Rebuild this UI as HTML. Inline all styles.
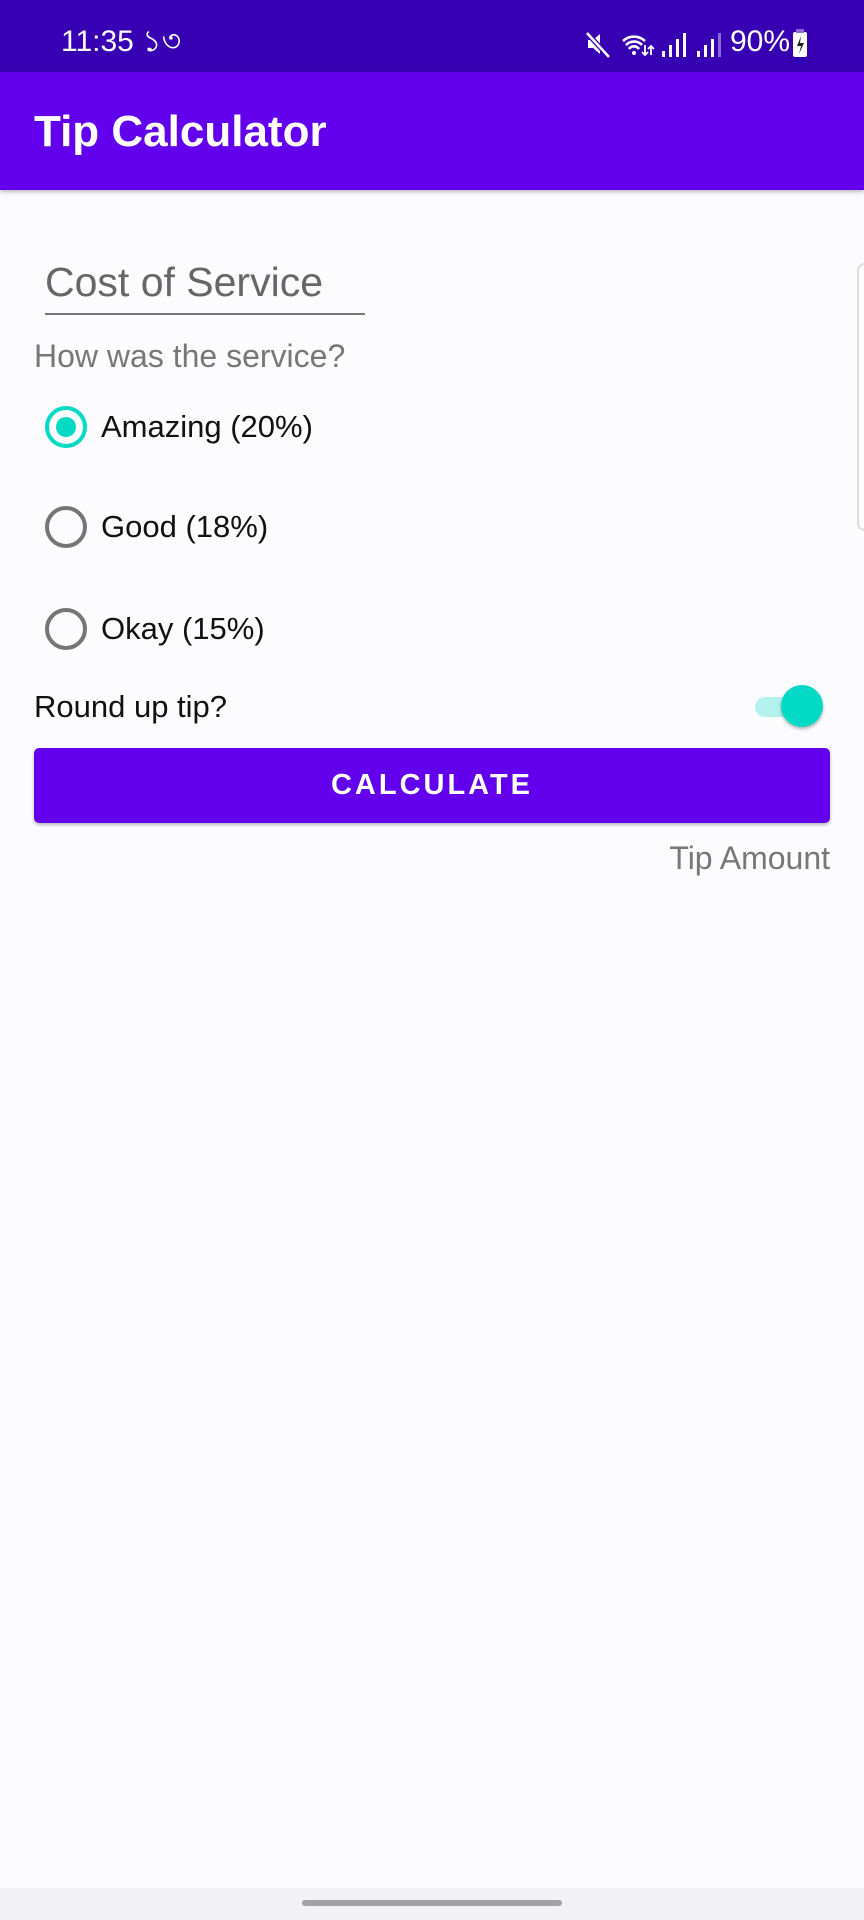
<!DOCTYPE html>
<html><head><meta charset="utf-8"><style>
*{margin:0;padding:0;box-sizing:border-box}
body{width:864px;height:1920px;background:#fcfbfe;font-family:"Liberation Sans","Noto Sans CJK SC",sans-serif;position:relative;overflow:hidden}
.abs{position:absolute}
.sb{left:0;top:0;width:864px;height:72px;background:#3700b3;color:#fff}
.ab{left:0;top:72px;width:864px;height:118px;background:#6200ee;box-shadow:0 2px 4px rgba(0,0,0,.25)}
.radio{width:42px;height:42px;border-radius:50%;border:4px solid #757575}
.radio.on{border-color:#03dac5}
.radio.on:after{content:"";position:absolute;left:7px;top:7px;width:20px;height:20px;border-radius:50%;background:#03dac5}
.rl{font-size:31px;color:#111}
</style></head><body>
<div class="abs sb">
<div class="abs" style="left:61px;top:27px;font-size:30px;line-height:30px">11:35 ১৩</div>
<svg class="abs" style="left:585px;top:31px" width="230" height="28" viewBox="0 0 230 28">
<path d="M3 9h5l7-6v20l-7-6H3z" fill="#fff"/><path d="M2 2l22 24" stroke="#3700b3" stroke-width="5"/><path d="M2 2l22 24" stroke="#fff" stroke-width="2.5"/>
<path d="M38 10a16 16 0 0 1 22 0M41 14a11 11 0 0 1 16 0M44 18a6 6 0 0 1 10 0" stroke="#fff" stroke-width="2.6" fill="none"/>
<circle cx="49" cy="22" r="2" fill="#fff"/><path d="M60 14v10M57 21l3 3 3-3M66 24v-9M63 18l3-3 3 3" stroke="#fff" stroke-width="1.8" fill="none"/>
<rect x="77" y="20" width="3" height="6" fill="#fff"/><rect x="84" y="14" width="3" height="12" fill="#fff"/><rect x="91" y="8" width="3" height="18" fill="#fff"/><rect x="98" y="2" width="3" height="24" fill="#fff"/>
<rect x="112" y="20" width="3" height="6" fill="#fff"/><rect x="119" y="14" width="3" height="12" fill="#fff"/><rect x="126" y="8" width="3" height="18" fill="#fff"/><rect x="133" y="2" width="3" height="24" fill="#8e6bd8"/>
</svg>
<div class="abs" style="left:730px;top:27px;font-size:30px;line-height:30px">90%</div>
<div class="abs" style="left:793px;top:32px;width:14px;height:25px;background:#fff;border-radius:2px"></div>
<div class="abs" style="left:796px;top:29px;width:8px;height:4px;background:#8e6bd8"></div>
<svg class="abs" style="left:793px;top:33px" width="14" height="24"><path d="M8 3L4 13h4l-2 8 5-11H7z" fill="#222"/></svg>
</div>
<div class="abs ab"><div class="abs" style="left:34px;top:34px;font-size:44px;font-weight:bold;color:#fff;line-height:52px">Tip Calculator</div></div>
<div class="abs" style="left:45px;top:259px;font-size:41px;color:#666;line-height:46px">Cost of Service</div>
<div class="abs" style="left:45px;top:313px;width:320px;height:2px;background:#777"></div>
<div class="abs" style="left:34px;top:338px;font-size:32px;color:#777;line-height:36px">How was the service?</div>
<div class="abs radio on" style="left:45px;top:406px"></div>
<div class="abs rl" style="left:101px;top:409px">Amazing (20%)</div>
<div class="abs radio" style="left:45px;top:506px"></div>
<div class="abs rl" style="left:101px;top:509px">Good (18%)</div>
<div class="abs radio" style="left:45px;top:608px"></div>
<div class="abs rl" style="left:101px;top:611px">Okay (15%)</div>
<div class="abs rl" style="left:34px;top:689px">Round up tip?</div>
<div class="abs" style="left:755px;top:697px;width:58px;height:20px;border-radius:10px;background:#b3f2ec"></div>
<div class="abs" style="left:781px;top:685px;width:42px;height:42px;border-radius:50%;background:#03dac5;box-shadow:0 2px 3px rgba(0,0,0,.3)"></div>
<div class="abs" style="left:34px;top:748px;width:796px;height:75px;background:#6200ee;border-radius:5px;box-shadow:0 2px 3px rgba(0,0,0,.25);color:#fff;font-size:29px;font-weight:bold;letter-spacing:3px;text-align:center;line-height:75px">CALCULATE</div>
<div class="abs" style="right:34px;top:840px;font-size:32px;color:#777">Tip Amount</div>
<div class="abs" style="left:857px;top:263px;width:20px;height:268px;border:2px solid #ddd;border-radius:8px"></div>
<div class="abs" style="left:0;top:1888px;width:864px;height:32px;background:#f2f1f4"></div>
<div class="abs" style="left:302px;top:1900px;width:260px;height:6px;border-radius:3px;background:#a3a3a3"></div>
</body></html>
